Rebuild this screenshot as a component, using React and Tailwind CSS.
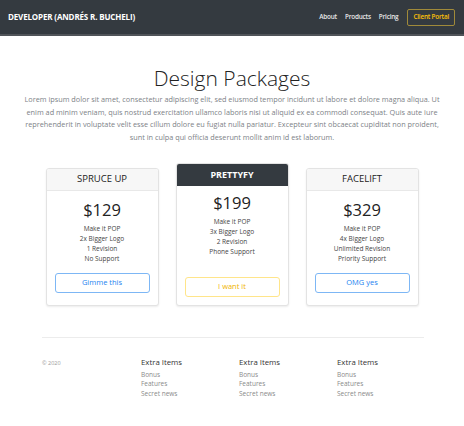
const cards = [
  {
    title: "SPRUCE UP",
    price: "$129",
    features: ["Make it POP", "2x Bigger Logo", "1 Revision", "No Support"],
    button: "Gimme this",
    featured: false,
  },
  {
    title: "PRETTYFY",
    price: "$199",
    features: ["Make it POP", "3x Bigger Logo", "2 Revision", "Phone Support"],
    button: "I want it",
    featured: true,
  },
  {
    title: "FACELIFT",
    price: "$329",
    features: ["Make it POP", "4x Bigger Logo", "Unlimited Revision", "Priority Support"],
    button: "OMG yes",
    featured: false,
  },
];

function PriceCard({ card }) {
  // La carte du milieu est plus haute, avec un en-tête sombre
  return (
    <div
      className={
        "w-[113px] flex flex-col bg-white border border-[#e3e3e3] rounded-[3px] shadow-[0_1px_2px_rgba(0,0,0,0.08)] overflow-hidden " +
        (card.featured ? "h-[143px]" : "h-[138px]")
      }
    >
      <div
        className={
          "h-[22px] flex items-center justify-center border-b " +
          (card.featured
            ? "bg-[#343a40] border-[#343a40] text-white font-bold text-[9px]"
            : "bg-[#f7f7f7] border-[#e8e8e8] text-[#222] text-[9.5px]")
        }
      >
        {card.title}
      </div>
      <div className={"flex flex-col items-center flex-grow px-[8px] " + (card.featured ? "pt-[6px] pb-[8px]" : "pt-[8px] pb-[12px]")}>
        <div className="text-[16.5px] leading-[22px] text-[#222]">{card.price}</div>
        <ul className="mt-[3px] text-[6.5px] leading-[10px] text-[#444] text-center">
          {card.features.map((f) => (
            <li key={f}>{f}</li>
          ))}
        </ul>
        <button
          className={
            "mt-auto w-full h-[20px] rounded-[3px] border text-[7.5px] " +
            (card.featured
              ? "border-[#ffe58a] text-[#f0b400]"
              : "border-[#7db7f5] text-[#2684f0]")
          }
        >
          {card.button}
        </button>
      </div>
    </div>
  );
}

function App() {
  return (
    <div className="min-h-screen bg-white font-['Open_Sans',sans-serif]">
      {/* Barre de navigation */}
      <nav className="h-[36px] bg-[#343a40] border-b-2 border-[#505459] flex items-center justify-between pl-[8px] pr-[9px]">
        <span className="text-white font-bold text-[8px] tracking-[-0.15px]">DEVELOPER (ANDRÉS R. BUCHELI)</span>
        <div className="flex items-center">
          <a className="text-[#e8e8e8] font-semibold text-[6.4px] tracking-[-0.2px] mr-[8px]">About</a>
          <a className="text-[#e8e8e8] font-semibold text-[6.4px] tracking-[-0.2px] mr-[8px]">Products</a>
          <a className="text-[#e8e8e8] font-semibold text-[6.4px] tracking-[-0.2px] mr-[9px]">Pricing</a>
          <button className="h-[17px] px-[5px] border border-[#a08a3a] rounded-[2px] text-[#ffc107] font-semibold text-[6.4px] tracking-[-0.2px]">
            Client Portal
          </button>
        </div>
      </nav>

      {/* En-tête de la section tarifs */}
      <div className="text-center mt-[30px] px-[22px]">
        <h1 className="text-[21px] leading-[25px] font-light text-[#222]">Design Packages</h1>
        <p className="mt-[2px] text-[7.3px] leading-[12.7px] text-[#7d8287]">
          Lorem ipsum dolor sit amet, consectetur adipiscing elit, sed eiusmod tempor incidunt ut labore et dolore magna aliqua. Ut enim ad minim veniam, quis nostrud exercitation ullamco laboris nisi ut aliquid ex ea commodi consequat. Quis aute iure reprehenderit in voluptate velit esse cillum dolore eu fugiat nulla pariatur. Excepteur sint obcaecat cupiditat non proident, sunt in culpa qui officia deserunt mollit anim id est laborum.
        </p>
      </div>

      {/* Cartes de prix */}
      <div className="flex justify-center items-end gap-[17px] mt-[19px]">
        {cards.map((c) => (
          <PriceCard key={c.title} card={c} />
        ))}
      </div>

      {/* Pied de page */}
      <footer className="mx-[42px] w-[382px] mt-[31px] border-t border-[#ececec] pt-[19px] grid grid-cols-[99px_98px_98px_1fr]">
        <div className="text-[5.5px] text-[#999] pt-[2px]">© 2020</div>
        {[0, 1, 2].map((i) => (
          <div key={i}>
            <h5 className="text-[7.8px] leading-[10px] text-[#333]">Extra Items</h5>
            <ul className="mt-[3px] text-[6.5px] leading-[9.5px] text-[#8a8a8a]">
              <li>Bonus</li>
              <li>Features</li>
              <li>Secret news</li>
            </ul>
          </div>
        ))}
      </footer>
    </div>
  );
}

export default App;
